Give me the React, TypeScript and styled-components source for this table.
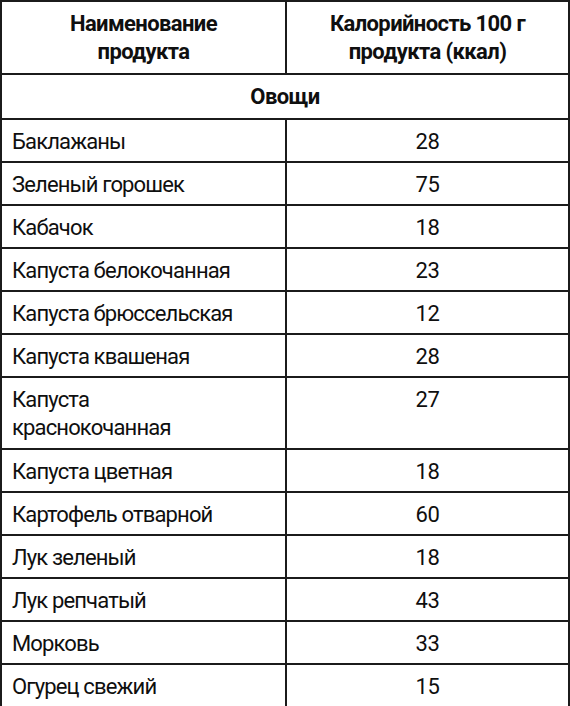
import { createGlobalStyle, styled } from "styled-components"

const GlobalStyle = createGlobalStyle`
  html, body {
    margin: 0;
    padding: 0;
    background: #ffffff;
  }
  body {
    font-family: Roboto, "Liberation Sans", sans-serif;
    color: #0f0f0f;
  }
`

const LINE = "#1b1b1b"

const Table = styled.table`
  width: 570px;
  border-collapse: separate;
  border-spacing: 0;
  border-top: 2px solid ${LINE};
  border-left: 2px solid ${LINE};
  border-right: 2px solid ${LINE};
  box-sizing: border-box;
  table-layout: fixed;
  font-size: 22px;
`

const HeadCell = styled.th<{ $first?: boolean }>`
  width: ${p => (p.$first ? "285px" : "auto")};
  box-sizing: border-box;
  padding: 8px 6px 7px;
  line-height: 28px;
  font-weight: 700;
  text-align: center;
  vertical-align: middle;
  border-bottom: 2px solid ${LINE};
  border-right: ${p => (p.$first ? `2px solid ${LINE}` : "none")};
  letter-spacing: -0.6px;
`

const SectionCell = styled.td`
  padding: 8px 6px 7px;
  line-height: 28px;
  font-weight: 700;
  text-align: center;
  border-bottom: 2px solid ${LINE};
  letter-spacing: -0.6px;
`

const NameCell = styled.td<{ $tall?: boolean }>`
  box-sizing: border-box;
  padding: 8px 8px 6px 10px;
  line-height: ${p => (p.$tall ? "28px" : "27px")};
  vertical-align: top;
  border-bottom: 2px solid ${LINE};
  border-right: 2px solid ${LINE};
  letter-spacing: -0.85px;
`

const ValueCell = styled.td`
  padding: 8px 6px 6px;
  line-height: 27px;
  vertical-align: top;
  text-align: center;
  border-bottom: 2px solid ${LINE};
  letter-spacing: -0.4px;
`

interface IProduct {
  name: string
  kcal: number
  lines?: string[]
}

const vegetables: IProduct[] = [
  { name: "Баклажаны", kcal: 28 },
  { name: "Зеленый горошек", kcal: 75 },
  { name: "Кабачок", kcal: 18 },
  { name: "Капуста белокочанная", kcal: 23 },
  { name: "Капуста брюссельская", kcal: 12 },
  { name: "Капуста квашеная", kcal: 28 },
  { name: "Капуста краснокочанная", kcal: 27, lines: ["Капуста", "краснокочанная"] },
  { name: "Капуста цветная", kcal: 18 },
  { name: "Картофель отварной", kcal: 60 },
  { name: "Лук зеленый", kcal: 18 },
  { name: "Лук репчатый", kcal: 43 },
  { name: "Морковь", kcal: 33 },
  { name: "Огурец свежий", kcal: 15 },
]

export default function App() {
  return (
    <>
      <GlobalStyle />
      <Table>
        <thead>
          <tr>
            <HeadCell $first>
              Наименование
              <br />
              продукта
            </HeadCell>
            <HeadCell>
              Калорийность 100 г
              <br />
              продукта (ккал)
            </HeadCell>
          </tr>
        </thead>
        <tbody>
          <tr>
            <SectionCell colSpan={2}>Овощи</SectionCell>
          </tr>
          {vegetables.map(item => (
            <tr key={item.name}>
              <NameCell $tall={!!item.lines}>
                {item.lines
                  ? item.lines.map((l, i) => (
                      <span key={l}>
                        {i > 0 && <br />}
                        {l}
                      </span>
                    ))
                  : item.name}
              </NameCell>
              <ValueCell>{item.kcal}</ValueCell>
            </tr>
          ))}
        </tbody>
      </Table>
    </>
  )
}
